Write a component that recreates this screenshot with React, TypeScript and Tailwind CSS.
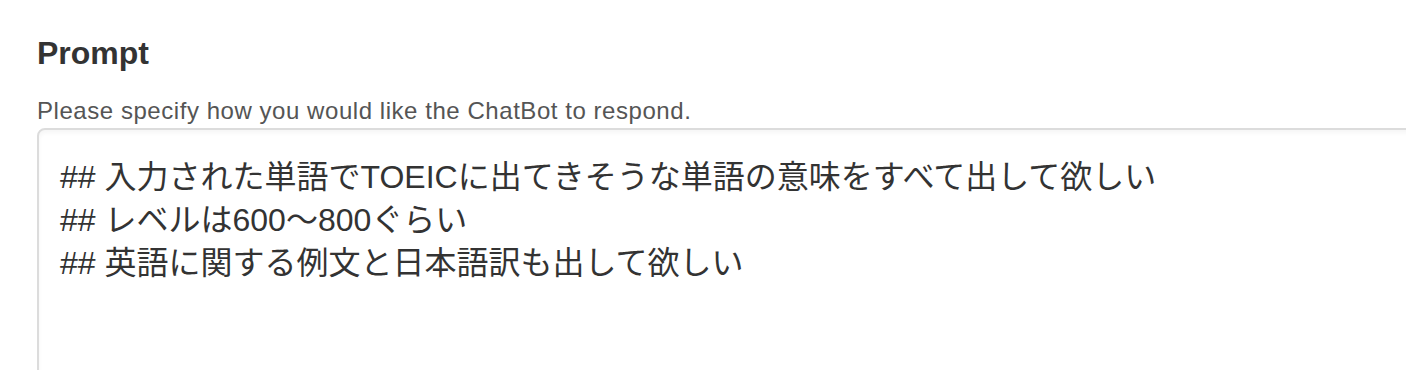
import React from 'react';

const promptText = `## 入力された単語でTOEICに出てきそうな単語の意味をすべて出して欲しい
## レベルは600〜800ぐらい
## 英語に関する例文と日本語訳も出して欲しい`;

export default function App() {
  return (
    <div
      className="min-h-screen bg-white pl-[37px] pt-[33px] overflow-hidden"
      style={{ fontFamily: '"Liberation Sans", "Noto Sans CJK JP", sans-serif' }}
    >
      <h2 className="text-[32px] font-bold leading-[40px] text-[#333333]">Prompt</h2>
      <p className="mt-[24px] text-[24px] leading-[28px] tracking-[0.55px] text-[#555555]">
        Please specify how you would like the ChatBot to respond.
      </p>
      <textarea
        readOnly
        defaultValue={promptText}
        className="mt-[3px] block w-[1420px] h-[300px] resize-none rounded-tl-[8px] border-2 border-[#dcdcdc] bg-white px-[21px] pt-[26px] text-[32px] leading-[43px] text-[#333333] shadow-[inset_0_3px_4px_rgba(0,0,0,0.04)] outline-none"
        style={{ fontFamily: '"Liberation Sans", "Noto Sans CJK JP", sans-serif' }}
      />
    </div>
  );
}
